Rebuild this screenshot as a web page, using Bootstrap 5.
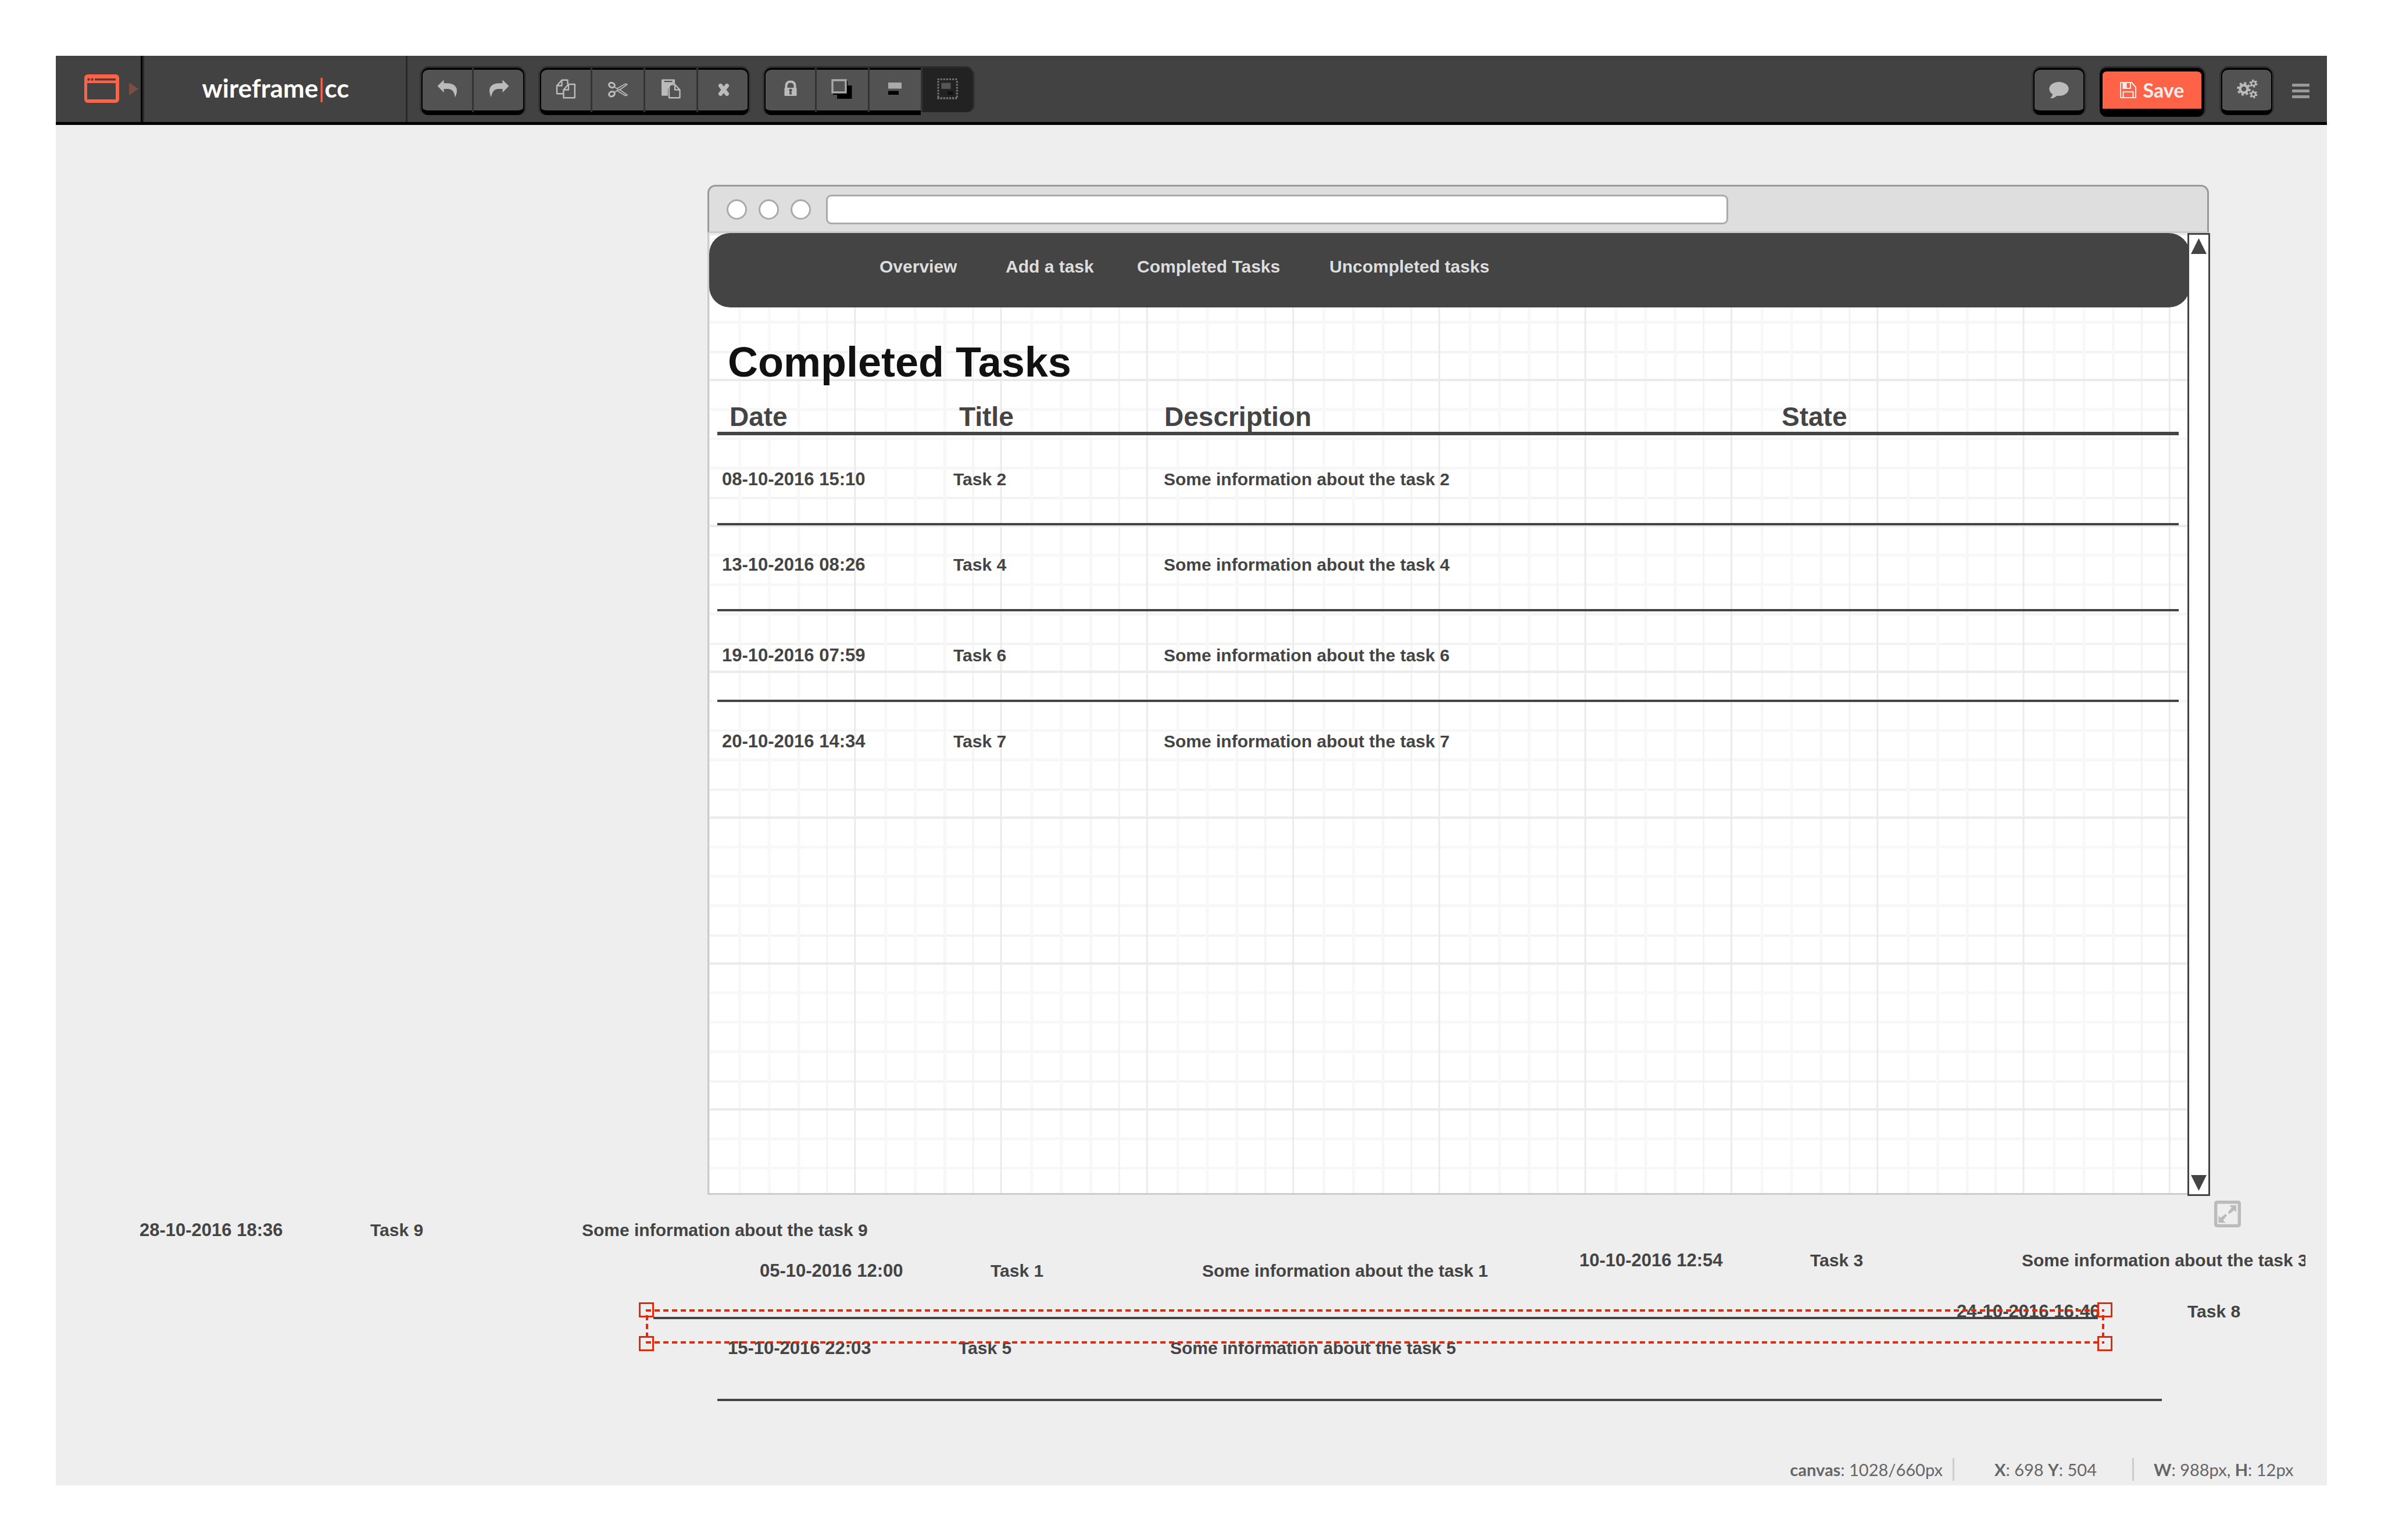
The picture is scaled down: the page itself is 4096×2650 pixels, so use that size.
<!DOCTYPE html>
<html lang="en">
<head>
<meta charset="utf-8">
<meta name="viewport" content="width=device-width, initial-scale=1">
<title>wireframe|cc</title>
<link href="https://cdn.jsdelivr.net/npm/bootstrap@5.3.0/dist/css/bootstrap.min.css" rel="stylesheet">
<style>
:root{--ink:#444;--accent:#ff6347;--tool:#424242;--face:#525252}
body{background:#fff;color:var(--ink);font-family:"Liberation Sans",Arial,sans-serif;font-size:30px;line-height:36px}
button{font-family:inherit}
.app-shell{min-height:100vh;padding:96px 93px 94px 96px}
.app-frame{background:#eee}

/* toolbar */
.toolbar{background:var(--tool);border-bottom:5px solid #000;height:119px;font-family:Lato,sans-serif}
.screen-btn{width:149px;border:0;border-right:3px solid #000;box-shadow:3px 0 0 #282828;background:none;padding:0 0 0 48px}
.brand{width:453px;margin-left:3px;padding:0 0 4px 2px;border-right:3px solid #282828;color:#fff;font-size:44px;font-weight:700;text-decoration:none}
.brand span{color:var(--accent);font-weight:400}
.tool-group{margin:21px 3px 0 24px;padding:0}
.tool-btn{position:relative;width:91px;height:81px;padding:0;border:0 solid #000;border-top-width:3px;border-bottom-width:8px;background:var(--face);color:#bbb;box-shadow:0 -3px 0 #2b2b2b}
.tool-btn svg{width:40px;height:40px;display:block;margin:auto}
.tool-group .tool-btn + .tool-btn{padding-left:3px}
.tool-group .tool-btn + .tool-btn::before{content:"";position:absolute;left:0;top:-3px;width:3px;height:76px;background:#333}
.tool-group .tool-btn:first-child{width:87px;border-left-width:2px;border-radius:12px 0 0 12px;box-shadow:-3px 0 0 #333,0 -3px 0 #2b2b2b}
.tool-group .tool-btn:last-child{width:90px;border-right-width:2px;border-radius:0 12px 12px 0;box-shadow:3px 0 0 #333,0 -3px 0 #2b2b2b}
.tool-group .tool-btn.is-pressed:last-child{height:76px;border-color:#222;border-bottom-width:3px;background:#222}
.tool-btn.tool-single{width:88px;margin:21px 3px 0 26px;border-width:3px 2px 8px;border-radius:12px;box-shadow:3px 0 0 #333,-3px 0 0 #333,0 -3px 0 #2b2b2b}
.save-btn{width:180px;height:84px;margin:21px 3px 0 23px;padding:0;border:solid #000;border-width:6px 5px 14px;border-radius:12px;background:var(--accent);color:#eee;font-size:34px;font-weight:700;box-shadow:3px 0 0 #333,0 -3px 0 #2b2b2b}
.save-btn svg{width:28px;height:28px}
.menu-btn{width:30px;margin:0 30px 0 31px;padding:0;border:0;background:none}

/* drawing area */
.workspace{padding:103px 203px 0 1121px}
.chrome-bar{height:83px;padding:2px 0 0 30px;background:#dedede;border:3px solid #999;border-bottom-color:#ccc;border-radius:14px 14px 0 0}
.dot{width:35px;height:35px;margin-right:20px;border:3px solid #aaa;border-radius:50%;background:#fff}
.dot:nth-child(3){margin-right:26px}
.address{width:1552px;height:51px;padding:0 16px;border:3px solid #aaa;border-radius:9px;background:#fff}
.artboard{height:1655px;border:3px solid #ccc;border-top:0;border-right:0;background-color:#fff;
 background-image:
 linear-gradient(90deg,transparent 248px,#ebebeb 248px),
 linear-gradient(transparent 247px,#ebebeb 247px),
 linear-gradient(90deg,transparent 49px,#f8f8f8 49px,#f8f8f8 54px,transparent 54px,transparent 100px,#f8f8f8 100px,#f8f8f8 105px,transparent 105px,transparent 151px,#f7f7f7 151px,#f7f7f7 156px,transparent 156px,transparent 200px,#f3f3f3 200px,#f3f3f3 203px,transparent 203px),
 linear-gradient(transparent 46px,#f8f8f8 46px,#f8f8f8 51px,transparent 51px,transparent 97px,#f7f7f7 97px,#f7f7f7 101px,transparent 101px,transparent 147px,#f7f7f7 147px,#f7f7f7 152px,transparent 152px,transparent 199px,#f3f3f3 199px,#f3f3f3 203px,transparent 203px);
 background-size:9.74% 251px;background-position:1px 4px}
.page-col{min-width:0}
.site-nav{height:128px;padding:46px 0 0 293px;border-radius:36px;background:var(--ink);grid-template-columns:217px 226px 331px auto;align-items:start;justify-content:start;margin-right:-4px}
.site-nav a{color:#ddd;font-weight:700;line-height:24px;text-decoration:none;white-space:nowrap}
.page-title{margin:54px 0 0 32px;color:#111;font-size:72px;line-height:80px;font-weight:700}
.task-table{width:calc(100% - 29px);margin:0 15px 0 14px;color:var(--ink);table-layout:fixed;font-weight:700;line-height:36px}
.task-table>:not(caption)>*>*{padding:58px 0 0 8px;border:0;border-bottom:4px solid var(--ink);background:none;box-shadow:none;color:inherit;vertical-align:top;height:156px}
.task-table>thead>tr>th{height:83px;padding:28px 0 0 9px;border-bottom-width:6px;font-size:46px;line-height:52px}
.task-table>thead>tr>th:first-child{padding-left:21px}
.task-table>thead>tr>th:nth-child(2){padding-left:18px}
.task-table>tbody>tr.snug>td{height:148px;padding-top:50px}
.task-table>tbody>tr:last-child>td{border-bottom:0}
.when{font-size:31px}
.c-date{width:398px}.c-title{width:362px}.c-desc{width:1062px}
.scroller{width:39px;height:1657px;margin-right:-2px;padding:6px 0;border:3px solid var(--ink);background:#fff}
.scroller svg{width:27px;height:27px;fill:var(--ink)}

/* loose pieces on the free canvas */
.loose{inset:119px 37px 0 0;overflow:hidden;pointer-events:none}
.piece{position:absolute;display:grid;grid-template-columns:397px 364px auto;align-items:baseline;font-weight:700;white-space:nowrap}
.piece-9{left:144px;top:1884px}
.piece-1{left:1211px;top:1954px}
.piece-3{left:2621px;top:1936px}
.piece-8{left:3270px;top:2024px}
.piece-5{left:1156px;top:2087px}
.rule{position:absolute;height:4px;background:var(--ink)}
.rule-a{left:1028px;right:357px;top:2051px}
.rule-b{left:1138px;right:247px;top:2192px}
.selection{position:absolute;left:1003px;right:332px;top:2026px;height:84px}
.selection svg{width:100%;height:100%;display:block}
.grip{position:absolute;width:26px;height:26px;border:3px solid #dc2b0f}
.grip-tl{left:0;top:0}.grip-tr{right:0;top:0}.grip-bl{left:0;bottom:0}.grip-br{right:0;bottom:0}
.resize-btn{left:3713px;top:1851px;width:46px;height:46px;padding:0;border:0;background:none}
.resize-btn svg{display:block}

/* status line */
.status{height:50px;font-family:Lato,sans-serif;font-size:29px;color:#666}
.status div{border-left:3px solid #ccc;line-height:39px;height:39px;margin-top:3px}
.status div:first-child{border:0}
.s-size{padding-right:17px}
.s-pos{width:309px;padding-left:69px}
.s-dim{width:335px;padding-left:34px}
</style>
</head>
<body>
<div class="app-shell d-flex flex-column">
<div class="app-frame d-flex flex-column flex-grow-1 position-relative">
 <header class="toolbar d-flex">
  <button class="screen-btn d-flex align-items-center" aria-label="Screens">
   <svg width="96" height="50" viewBox="0 0 96 50"><rect x="1" width="60" height="49" rx="6" fill="#ff6347"/><path d="M6 15h49v28H6zM19 7h36v3.500H19z" fill="#424242"/><circle cx="8.500" cy="8.700" r="2.200" fill="#424242"/><circle cx="14.500" cy="8.700" r="2.200" fill="#424242"/><path d="M78 14v22l16-11z" fill="#7d4d44"/></svg>
  </button>
  <a class="brand d-flex align-items-center justify-content-center" href="#">wireframe<span>|</span>cc</a>
  <div class="tool-group d-flex">
   <button class="tool-btn" aria-label="Undo"><svg viewBox="0 0 40 40"><path fill="currentColor" d="M2.500 13 13.500 2.400V8.200H19C31 8.200 36 14 36 21C36 25 34.500 29 33 32.300C31.500 26 30.500 18 19 18H13.500V24.300Z"/></svg></button>
   <button class="tool-btn" aria-label="Redo"><svg viewBox="0 0 40 40"><path fill="currentColor" transform="matrix(-1 0 0 1 40 0)" d="M2.500 13 13.500 2.400V8.200H19C31 8.200 36 14 36 21C36 25 34.500 29 33 32.300C31.500 26 30.500 18 19 18H13.500V24.300Z"/></svg></button>
  </div>
  <div class="tool-group d-flex">
   <button class="tool-btn" aria-label="Copy"><svg viewBox="0 0 40 40" fill="none" stroke="currentColor" stroke-width="2.400" stroke-linejoin="round"><path d="M15 26.200H4V12.500L12.500 2.800H22.500V10M4 12.500H12.500V2.800M15.500 33.200V19.500L24 10H34.800V33.200ZM15.500 19.500H24V10"/></svg></button>
   <button class="tool-btn" aria-label="Cut"><svg viewBox="0 0 40 40" fill="none" stroke="currentColor"><ellipse cx="9.500" cy="11.500" rx="5" ry="4" stroke-width="3.200" transform="rotate(25 9.500 11.500)"/><ellipse cx="9.500" cy="26.800" rx="5" ry="4" stroke-width="3.200" transform="rotate(-25 9.500 26.800)"/><path stroke-width="1.700" stroke-linejoin="round" d="M14.500 15 18.500 17.500 33 9.200 36 10.200 22 20.500M14.500 23.500 18.500 21 20 19.500M22 18.500 36 28.500 33 29.700 18.500 21"/><circle cx="20" cy="19.300" r="1" fill="currentColor"/></svg></button>
   <button class="tool-btn" aria-label="Paste"><svg viewBox="0 0 40 40"><path fill="currentColor" fill-rule="evenodd" d="M5 1.600H26Q27 1.600 27 2.600V9H22.500L15 18V29.700H5Q4 29.700 4 28.700V2.600Q4 1.600 5 1.600ZM8.600 4V6.200H22.700V4Z"/><path fill="none" stroke="currentColor" stroke-width="2.400" stroke-linejoin="round" d="M17 33.200V10.500H27L35.500 19.500V33.200ZM27 10.500V19.500H35.500"/></svg></button>
   <button class="tool-btn" aria-label="Delete"><svg viewBox="0 0 40 40"><path stroke="currentColor" stroke-width="7" stroke-linecap="round" d="M15.500 12.500 26.500 26.500M26.500 12.500 15.500 26.500"/></svg></button>
  </div>
  <div class="tool-group d-flex">
   <button class="tool-btn" aria-label="Lock"><svg viewBox="0 0 40 40"><path fill="none" stroke="currentColor" stroke-width="4" d="M12.500 18V13Q12.500 5.500 20 5.500T27.500 13V18"/><path fill="currentColor" fill-rule="evenodd" d="M10.500 16H29.500Q30.500 16 30.500 17V29Q30.500 30 29.500 30H10.500Q9.500 30 9.500 29V17Q9.500 16 10.500 16ZM20 17.800A2.500 2.500 0 0 0 18.600 22.500L17.800 27.500H22.200L21.400 22.500A2.500 2.500 0 0 0 20 17.800Z"/></svg></button>
   <button class="tool-btn" aria-label="Bring forward"><svg viewBox="0 0 40 40"><path d="M27 4H29V12H36.500V35H11V28H4V24H27Z" fill="#000"/><path d="M3 3H26V24H3Z" fill="#525252" stroke="#aaa" stroke-width="3.300"/></svg></button>
   <button class="tool-btn" aria-label="Align"><svg viewBox="0 0 40 40"><path d="M8 7H31V17.500H8Z" fill="#aaa"/><path d="M8 21.500H26V28H8Z" fill="#000"/></svg></button>
   <button class="tool-btn is-pressed" aria-label="Group" aria-pressed="true"><svg viewBox="0 0 40 40"><path d="M2.500 1H38M2.500 34H38" stroke="#777" stroke-width="3.300" stroke-dasharray="3.200 1.900"/><path d="M4 4.500V33M36.400 4.500V33" stroke="#777" stroke-width="3" stroke-dasharray="3 2"/><path d="M9.500 7.500H25.500V18H9.500Z" fill="#555"/><path d="M20 22H30V28H20Z" fill="#111"/></svg></button>
  </div>
  <div class="d-flex ms-auto">
   <button class="tool-btn tool-single" aria-label="Comment"><svg viewBox="0 0 40 40"><ellipse cx="20" cy="18" rx="16.700" ry="12" fill="currentColor"/><path fill="currentColor" d="M9 26Q9 31 5.500 33Q6 35 9 34Q15 32 18 28Z"/></svg></button>
   <button class="save-btn d-flex align-items-center justify-content-center"><svg viewBox="0 0 28 28"><path fill="none" stroke="currentColor" stroke-width="2" stroke-linejoin="round" d="M1 1H20L27 9V27H1ZM5.500 27V17H22.500V27M5.500 1V11H18V1"/><path d="M5.500 1H11.500V11H5.500Z" fill="currentColor"/></svg><span class="ms-2 ps-1">Save</span></button>
   <button class="tool-btn tool-single" aria-label="Settings"><svg viewBox="0 0 40 40" fill="none" stroke="currentColor"><circle cx="15" cy="18" r="6.500" stroke-width="4.500"/><circle cx="15" cy="18" r="10" stroke-width="3.600" stroke-dasharray="4 3.850"/><circle cx="31.500" cy="8.700" r="3.700" stroke-width="2.600"/><circle cx="31.500" cy="8.700" r="5.800" stroke-width="2.400" stroke-dasharray="3 3.070"/><circle cx="31.500" cy="27.300" r="3.700" stroke-width="2.600"/><circle cx="31.500" cy="27.300" r="5.800" stroke-width="2.400" stroke-dasharray="3 3.070"/></svg></button>
   <button class="menu-btn" aria-label="Menu"><svg width="30" height="26" viewBox="0 0 30 26" fill="#999"><rect width="30" height="5" rx="1"/><rect y="10" width="30" height="5" rx="1"/><rect y="20" width="30" height="5" rx="1"/></svg></button>
  </div>
 </header>

 <main class="workspace">
  <div class="chrome-bar d-flex align-items-center">
   <span class="dot"></span><span class="dot"></span><span class="dot"></span>
   <input class="address" type="text" aria-label="Address">
  </div>
  <div class="artboard d-flex">
   <div class="page-col flex-grow-1">
    <nav class="site-nav d-grid">
     <a href="#">Overview</a><a href="#">Add a task</a><a href="#">Completed Tasks</a><a href="#">Uncompleted tasks</a>
    </nav>
    <h1 class="page-title">Completed Tasks</h1>
    <table class="table task-table">
     <colgroup><col class="c-date"><col class="c-title"><col class="c-desc"><col></colgroup>
     <thead><tr><th>Date</th><th>Title</th><th>Description</th><th>State</th></tr></thead>
     <tbody>
      <tr><td class="when">08-10-2016 15:10</td><td>Task 2</td><td>Some information about the task 2</td><td></td></tr>
      <tr class="snug"><td class="when">13-10-2016 08:26</td><td>Task 4</td><td>Some information about the task 4</td><td></td></tr>
      <tr><td class="when">19-10-2016 07:59</td><td>Task 6</td><td>Some information about the task 6</td><td></td></tr>
      <tr class="snug"><td class="when">20-10-2016 14:34</td><td>Task 7</td><td>Some information about the task 7</td><td></td></tr>
     </tbody>
    </table>
   </div>
   <div class="scroller d-flex flex-column align-items-center justify-content-between flex-shrink-0">
    <svg viewBox="0 0 27 27"><path d="M13.500 0 27 27H0z"/></svg>
    <svg viewBox="0 0 27 27"><path d="M0 0H27L13.500 27z"/></svg>
   </div>
  </div>
 </main>

 <div class="loose position-absolute">
  <div class="piece piece-9"><span class="when">28-10-2016 18:36</span><span>Task 9</span><span>Some information about the task 9</span></div>
  <div class="piece piece-1"><span class="when">05-10-2016 12:00</span><span>Task 1</span><span>Some information about the task 1</span></div>
  <div class="piece piece-3"><span class="when">10-10-2016 12:54</span><span>Task 3</span><span>Some information about the task 3</span></div>
  <div class="piece piece-8"><span class="when">24-10-2016 16:46</span><span>Task 8</span></div>
  <div class="piece piece-5"><span class="when">15-10-2016 22:03</span><span>Task 5</span><span>Some information about the task 5</span></div>
  <div class="rule rule-a"></div>
  <div class="rule rule-b"></div>
  <div class="selection">
   <svg><g stroke="#dc2b0f" stroke-width="4"><line x1="12" y1="14" x2="2521" y2="14" stroke-dasharray="9 6"/><line x1="12" y1="69" x2="2521" y2="69" stroke-dasharray="9 6"/><line x1="14" y1="22" x2="14" y2="64" stroke-dasharray="9 6"/><line x1="2519" y1="22" x2="2519" y2="64" stroke-dasharray="9 6"/></g></svg>
   <span class="grip grip-tl"></span><span class="grip grip-tr"></span><span class="grip grip-bl"></span><span class="grip grip-br"></span>
  </div>
  <button class="resize-btn position-absolute" aria-label="Resize canvas"><svg width="46" height="46" viewBox="0 0 46 46"><rect x="2.700" y="2.700" width="40.600" height="40.600" rx="2" fill="none" stroke="#bbb" stroke-width="5.400"/><path d="M26 8H38V20L34.500 16.500 26 23 23.500 20.500 30 12ZM20 38H7.500V26L11 29.500 19.500 23 22 25.500 15.500 34Z" fill="#bbb"/></svg></button>
 </div>

 <footer class="status d-flex justify-content-end mt-auto">
  <div class="s-size"><b>canvas</b>: 1028/660px</div>
  <div class="s-pos"><b>X</b>: 698 <b>Y</b>: 504</div>
  <div class="s-dim"><b>W</b>: 988px, <b>H</b>: 12px</div>
 </footer>
</div>
</div>
<script src="https://cdn.jsdelivr.net/npm/bootstrap@5.3.0/dist/js/bootstrap.bundle.min.js"></script>
</body>
</html>
